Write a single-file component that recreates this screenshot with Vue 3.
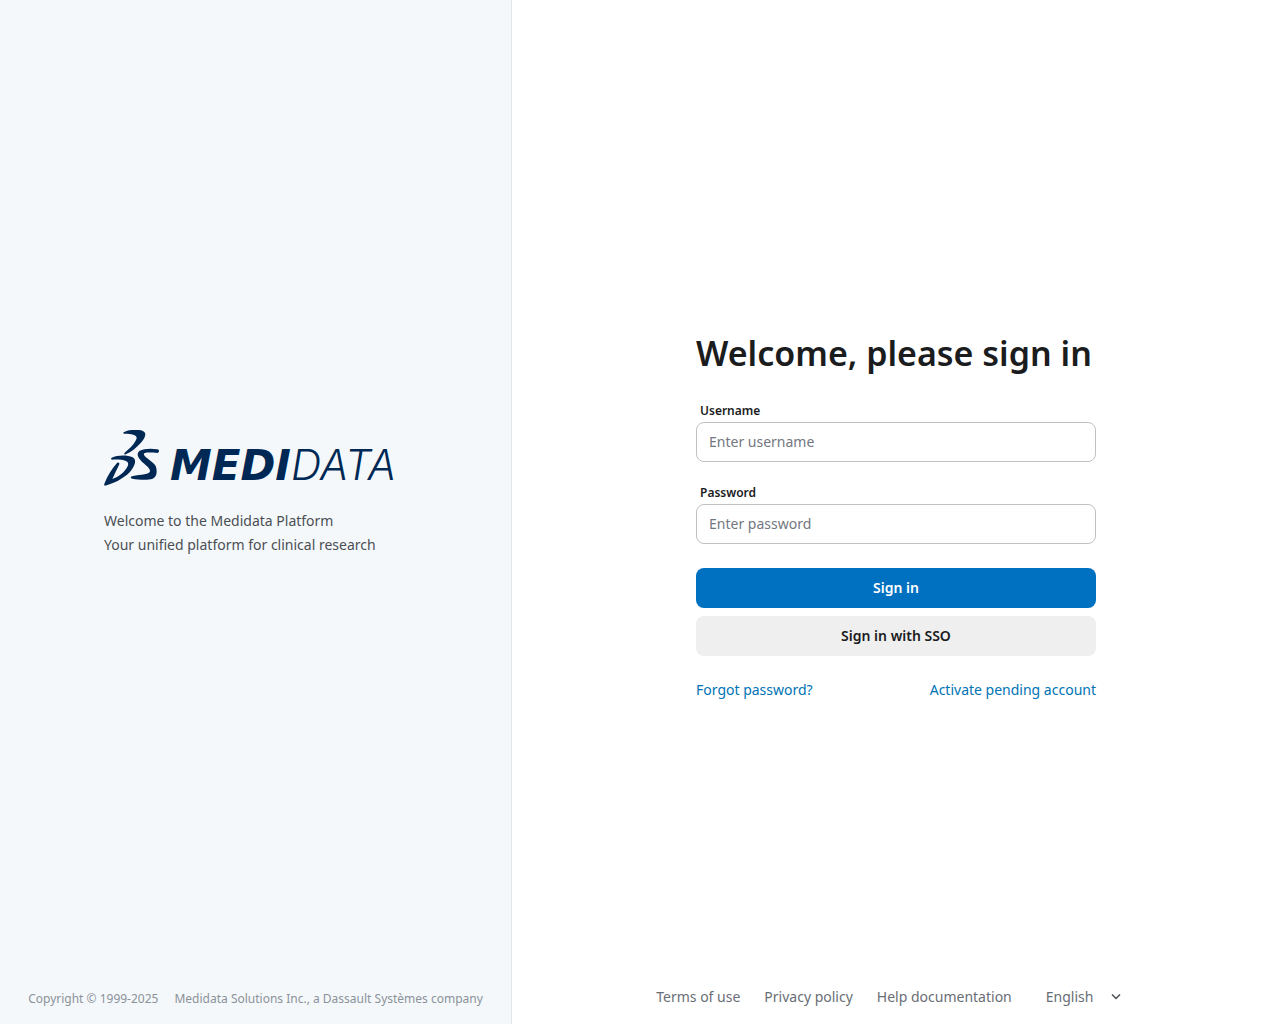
<script setup>
import { ref } from 'vue'

const username = ref('')
const password = ref('')
const language = ref('English')
</script>

<template>
  <div class="page">
    <aside class="brand-panel">
      <div class="brand">
        <div class="logo" role="img" aria-label="Medidata">
          <svg class="emblem" viewBox="24 29 166 168" aria-hidden="true">
            <path d="M82 36C96 28 122 26 138 31C153 37 147 51 135 66C121 82 105 95 88 102C84 104 82 101 85 97C101 85 115 69 120 57C125 44 109 40 84 40C80 40 80 38 82 36Z" />
            <path d="M46 112C62 105 91 103 109 111C124 119 114 140 100 156C80 176 52 190 26 196C23 196 23 192 25 188C33 167 47 145 62 128C66 125 70 128 69 132C61 148 55 162 48 176C67 170 86 155 94 138C102 121 81 117 48 118C44 118 43 115 46 112Z" />
            <path d="M187 95C190 91 188 88 182 87C164 83 142 85 129 92C119 101 125 113 140 127C150 136 162 144 161 153C159 163 137 162 107 168C102 170 102 174 108 175C129 179 156 180 169 175C183 169 183 150 178 137C172 125 146 112 143 103C140 96 157 96 184 98Z" />
          </svg>
          <span class="wordmark"><b>MEDI</b><span>DATA</span></span>
        </div>
        <p class="tagline">Welcome to the Medidata Platform<br />Your unified platform for clinical research</p>
      </div>
      <footer class="copyright">
        <span>Copyright © 1999-2025</span>
        <span>Medidata Solutions Inc., a Dassault Systèmes company</span>
      </footer>
    </aside>

    <main class="sign-in-panel">
      <form class="sign-in" @submit.prevent>
        <h1>Welcome, please sign in</h1>
        <div class="field">
          <label for="username">Username</label>
          <input id="username" v-model="username" type="text" placeholder="Enter username" />
        </div>
        <div class="field">
          <label for="password">Password</label>
          <input id="password" v-model="password" type="password" placeholder="Enter password" />
        </div>
        <div class="actions">
          <button class="primary" type="submit">Sign in</button>
          <button class="secondary" type="button">Sign in with SSO</button>
        </div>
        <div class="account-links">
          <a href="#forgot">Forgot password?</a>
          <a href="#activate">Activate pending account</a>
        </div>
      </form>
      <footer class="legal">
        <a href="#terms">Terms of use</a>
        <a href="#privacy">Privacy policy</a>
        <a href="#help">Help documentation</a>
        <div class="language">
          <select v-model="language" aria-label="Language">
            <option>English</option>
          </select>
          <svg viewBox="0 0 24 24" aria-hidden="true"><path d="M4 7l8 8 8-8" /></svg>
        </div>
      </footer>
    </main>
  </div>
</template>

<style>
body {
  margin: 0;
}
</style>

<style scoped>
.page {
  display: grid;
  grid-template-columns: 2fr 3fr;
  min-height: 100vh;
  font-family: "Noto Sans", sans-serif;
  font-size: 14px;
  color: #1b1c1d;
  background: #fff;
}
.page * {
  box-sizing: border-box;
}
.brand-panel,
.sign-in-panel {
  display: grid;
  grid-template-rows: 1fr auto 1fr;
  justify-items: center;
}
.brand-panel {
  background: #f4f8fb;
  border-right: 1px solid #e2e6ea;
}
.brand {
  grid-row: 2;
  width: 303px;
  padding-bottom: 38px;
}
.logo {
  display: flex;
  align-items: flex-end;
  gap: 10px;
  height: 56px;
  color: #002855;
}
.emblem {
  flex: none;
  width: 56px;
  height: 56px;
  fill: currentColor;
}
.wordmark {
  font-family: "DejaVu Sans", sans-serif;
  font-size: 42px;
  font-style: italic;
  line-height: 40px;
  white-space: nowrap;
}
.wordmark b {
  font-weight: 700;
}
.wordmark span {
  font-family: Inter, sans-serif;
  font-weight: 300;
}
.tagline {
  margin: 23px 0 0;
  line-height: 24px;
  color: #4b4f54;
}
.copyright {
  grid-row: 3;
  align-self: end;
  display: flex;
  gap: 16px;
  padding-bottom: 15px;
  font-size: 12px;
  line-height: 20px;
  color: #8b929a;
}
.sign-in {
  grid-row: 2;
  width: 400px;
  padding-top: 6px;
}
h1 {
  margin: 0 0 26px;
  font-size: 34px;
  font-weight: 600;
  line-height: 46px;
  white-space: nowrap;
}
.field {
  display: flex;
  flex-direction: column;
  gap: 2px;
  margin-bottom: 22px;
}
label {
  padding-left: 4px;
  font-size: 12px;
  font-weight: 600;
  line-height: 18px;
}
input {
  width: 100%;
  height: 40px;
  padding: 0 12px 1px;
  font: inherit;
  color: inherit;
  background: #fff;
  border: 1px solid #bfc1c5;
  border-radius: 8px;
}
input::placeholder {
  color: #73777f;
}
.actions {
  display: flex;
  flex-direction: column;
  gap: 8px;
  margin: 24px 0;
}
button {
  height: 40px;
  padding: 0 16px 2px;
  font: inherit;
  font-weight: 600;
  border: 0;
  border-radius: 8px;
}
.primary {
  color: #fff;
  background: #0070c0;
}
.secondary {
  color: #1b1c1d;
  background: #efefef;
}
a {
  color: inherit;
  text-decoration: none;
}
.account-links {
  display: flex;
  justify-content: space-between;
  line-height: 20px;
  color: #0073b5;
}
.legal {
  grid-row: 3;
  align-self: end;
  display: flex;
  align-items: center;
  gap: 24px;
  padding-bottom: 17px;
  line-height: 20px;
  color: #696e75;
}
.language {
  display: flex;
  align-items: center;
  gap: 16px;
  padding: 0 14px 0 10px;
}
select {
  appearance: none;
  padding: 0;
  font: inherit;
  color: inherit;
  background: none;
  border: 0;
}
.language svg {
  width: 12px;
  height: 12px;
  fill: none;
  stroke: #4b4f54;
  stroke-width: 3;
}
</style>
